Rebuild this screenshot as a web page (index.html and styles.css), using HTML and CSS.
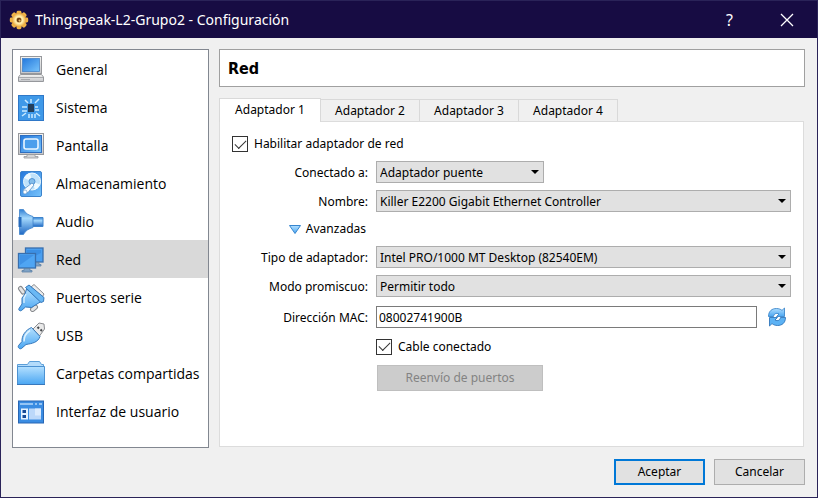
FILE: index.html
```html
<!DOCTYPE html>
<html lang="es">
<head>
<meta charset="utf-8">
<title>Thingspeak-L2-Grupo2 - Configuración</title>
<link rel="stylesheet" href="styles.css">
</head>
<body>
<svg class="defs" width="0" height="0" aria-hidden="true">
  <defs>
    <linearGradient id="blue" x1="0" y1="0" x2="1" y2="1"><stop offset="0" stop-color="#2478dc"/><stop offset="1" stop-color="#78c4fc"/></linearGradient>
    <linearGradient id="sky" x1="0" y1="0" x2="0" y2="1"><stop offset="0" stop-color="#b4e0ff"/><stop offset="1" stop-color="#4aa6f2"/></linearGradient>
    <linearGradient id="deep" x1="0" y1="0" x2="0" y2="1"><stop offset="0" stop-color="#2f7fd4"/><stop offset="0.35" stop-color="#a4d8fc"/><stop offset="1" stop-color="#1f68c4"/></linearGradient>
    <linearGradient id="grey" x1="0" y1="0" x2="0" y2="1"><stop offset="0" stop-color="#f4f4f2"/><stop offset="1" stop-color="#c4c6ca"/></linearGradient>
    <radialGradient id="gold"><stop offset="0" stop-color="#c88420"/><stop offset="0.5" stop-color="#fff0b0"/><stop offset="1" stop-color="#e8a030"/></radialGradient>
  </defs>
</svg>
<div class="window">
  <header class="titlebar">
    <svg class="app-icon" viewBox="0 0 20 20" aria-hidden="true">
      <g fill="#f0b548"><rect x="7.6" y="0.8" width="4.8" height="18.4" rx="1.4"/><rect x="7.6" y="0.8" width="4.8" height="18.4" rx="1.4" transform="rotate(45 10 10)"/><rect x="7.6" y="0.8" width="4.8" height="18.4" rx="1.4" transform="rotate(90 10 10)"/><rect x="7.6" y="0.8" width="4.8" height="18.4" rx="1.4" transform="rotate(135 10 10)"/></g>
      <circle cx="10" cy="10" r="7.2" fill="url(#gold)"/><circle cx="10" cy="10" r="2.3" fill="#6b3d10"/><circle cx="10.6" cy="10.6" r="1.1" fill="#e8c070"/>
    </svg>
    <h1 class="title">Thingspeak-L2-Grupo2 - Configuración</h1>
    <button class="caption-button" type="button" aria-label="Ayuda">?</button>
    <button class="caption-button" type="button" aria-label="Cerrar"><svg class="close-icon" viewBox="0 0 14 14"><path d="M1 1L13 13M13 1L1 13" stroke="#fff" stroke-width="1.3"/></svg></button>
  </header>
  <div class="body">
    <nav class="sidebar">
      <a class="item" href="#general"><svg class="icon" viewBox="0 0 28 28"><rect x="3.500" y="0.500" width="21" height="17" fill="url(#grey)" stroke="#96989c"/><rect x="5.500" y="2.500" width="17" height="13" fill="url(#blue)" stroke="#3a7cc8" stroke-width=".7"/><path d="M3.500 18.500h21l2 2.500v4.500h-25V21z" fill="url(#grey)" stroke="#96989c"/><path d="M2 21.500h24M4 23.500h9" stroke="#a8aaae"/></svg>General</a>
      <a class="item" href="#sistema"><svg class="icon" viewBox="0 0 28 28"><rect x="1.500" y="1.500" width="25" height="25" fill="#3f99e8" stroke="#2f78c8"/><g stroke="#c9eaff" stroke-width="1.500"><path d="M14 5v4M8 6l3 3M22 5l-4 4M5 13h5M5 17h5M18 13h3M18 16h4M19 19l4 3M12 20v4M15 20v4M18 20v4M9 19l-4 3"/></g><rect x="11" y="10" width="6" height="8" fill="#24405c"/></svg>Sistema</a>
      <a class="item" href="#pantalla"><svg class="icon" viewBox="0 0 28 28"><rect x="1.500" y="1.500" width="25" height="21" fill="url(#grey)" stroke="#96989c"/><rect x="3.500" y="3.500" width="21" height="17" fill="url(#blue)" stroke="#2f6fc0"/><rect x="7" y="7" width="14" height="10" rx="2" fill="#4b9eec" stroke="#eaf6ff" stroke-width="1.600"/><path d="M10 22.500h8v2h3v1.500H7v-1.500h3z" fill="#d6d6d6" stroke="#96989c" stroke-width=".8"/></svg>Pantalla</a>
      <a class="item" href="#almacenamiento"><svg class="icon" viewBox="0 0 28 28"><rect x="3.500" y="1.500" width="21" height="25" rx="1.500" fill="url(#blue)" stroke="#3b83cc"/><circle cx="15" cy="11.500" r="8.500" fill="#bfe2fb" stroke="#eefaff"/><path d="M15 11.500L7 8a8.500 8.500 0 0 1 6-5zM15 11.500l8 3a8.500 8.500 0 0 1-5 5z" fill="#eefaff"/><circle cx="15" cy="11.500" r="3" fill="#84bdea" stroke="#3b83cc" stroke-width=".8"/><path d="M15 13L6 20l1.500 3.500 3.500-1 6-7.500z" fill="#f6fbff" stroke="#5c93c8" stroke-width=".8"/><circle cx="8" cy="22" r="2" fill="#fff" stroke="#5c93c8" stroke-width=".6"/></svg>Almacenamiento</a>
      <a class="item" href="#audio"><svg class="icon" viewBox="0 0 28 28"><path d="M14 9.500h12v9H14z" fill="url(#deep)" stroke="#3f84cc"/><path d="M2.500 1.500h4c2 4 5 5.500 9.500 7v11c-4.500 1.500-7.500 3-9.500 7h-4z" fill="url(#deep)" stroke="#3f84cc" stroke-width=".8"/><path d="M1.500 9h3v10h-3z" fill="#256abc"/></svg>Audio</a>
      <a class="item active" href="#red" aria-current="page"><svg class="icon" viewBox="0 0 28 28"><rect x="8.500" y="2" width="17.500" height="14" fill="#4a9ff0" stroke="#386fae" stroke-width="1.300"/><path d="M10 4h14v3L10 14z" fill="#3b8fe4"/><path d="M15 16.500h7v2h2v1.500H13" fill="#7fa3c6" stroke="#5d81a6" stroke-width=".8"/><rect x="1.500" y="7.500" width="17" height="14.500" fill="#4fa5f3" stroke="#386fae" stroke-width="1.300"/><path d="M3 9h14L3 19z" fill="#3f92e6"/><path d="M7 22.500h6v2h2V26H5v-1.500h2z" fill="#7fa3c6" stroke="#5d81a6" stroke-width=".8"/></svg>Red</a>
      <a class="item" href="#puertos"><svg class="icon" viewBox="0 0 28 28"><path d="M14 3l3-2.500L27 10l-2 3.500z" fill="#ececec" stroke="#8a8c90"/><path d="M3.500 4.500L6 8M18.500 23l-3 2.500" stroke="#85888c" stroke-width="5" stroke-linecap="round"/><path d="M3.500 4.500L6 8M18.500 23l-3 2.500" stroke="#e4e4e4" stroke-width="3" stroke-linecap="round"/><path d="M9.500 5L24 17.500l-4 2.500-5.500 3.500-6-.5-4 3.500c-1.500 1-3.500-.5-2.500-2l3-4.500v-6l3-4z" fill="url(#sky)" stroke="#3577ba"/><path d="M8.500 3.500L12 1l15 12.500-.5 4-2.500 1z" fill="#6ab8f4" stroke="#3577ba"/><path d="M9 10l-2 4v5" fill="none" stroke="#def2ff" stroke-width="1.300"/></svg>Puertos serie</a>
      <a class="item" href="#usb"><svg class="icon" viewBox="0 0 28 28"><path d="M16 7l6-6 5 1 .5 5-5 7z" fill="#e9e9e9" stroke="#8a8c90"/><path d="M20.500 5l1.500 1.500M23.500 7.500L25 9" stroke="#44474b" stroke-width="2"/><path d="M14.500 5.500l8.500 9c-2 6-8 7-14 8l-4.500 4c-2 1-4-1-3-3l3.500-4C4.500 14 8.500 8 14.500 5.500z" fill="url(#sky)" stroke="#3577ba"/><path d="M13 8.500c-4 2.500-6 6-6 11" fill="none" stroke="#dff3ff" stroke-width="1.500"/></svg>USB</a>
      <a class="item" href="#carpetas"><svg class="icon" viewBox="0 0 28 28"><path d="M.5 24.500V4.500h10l2-3h10l2 3h2v20z" fill="#b4dcfb" stroke="#5c9fd8"/><path d="M.5 6.500h27v18H.5z" fill="url(#sky)" stroke="#4c92d2"/><path d="M0 24.500h28" stroke="#3878bc"/></svg>Carpetas compartidas</a>
      <a class="item" href="#interfaz"><svg class="icon" viewBox="0 0 28 28"><rect x="1.500" y="3" width="25" height="22" fill="#3a8ce2" stroke="#2866b4"/><path d="M3 6h13M18 6h2M22 6h3" stroke="#b4d8fc" stroke-width="1.300"/><path d="M4 10.500h7v11H4z" fill="#e7f3ff"/><path d="M12 10.500h12v11H12z" fill="#bcd8fa"/><path d="M18 10.500h6v7h-6z" fill="#dcebfe"/><path d="M5.500 12h3.500v3H5.500zM5.500 17h3.500v3H5.500z" fill="#174a96"/></svg>Interfaz de usuario</a>
    </nav>
    <main class="content">
      <h2 class="page-title">Red</h2>
      <div class="tabs" role="tablist">
        <button class="tab selected" type="button" role="tab" aria-selected="true">Adaptador 1</button>
        <button class="tab" type="button" role="tab" aria-selected="false">Adaptador 2</button>
        <button class="tab" type="button" role="tab" aria-selected="false">Adaptador 3</button>
        <button class="tab" type="button" role="tab" aria-selected="false">Adaptador 4</button>
      </div>
      <form class="panel" id="network">
        <label class="check"><input type="checkbox" checked>Habilitar adaptador de red</label>
        <div class="fields">
          <label class="label" for="attached">Conectado a:</label>
          <div class="select short"><select id="attached"><option>Adaptador puente</option></select></div>
          <label class="label" for="name">Nombre:</label>
          <div class="select"><select id="name"><option>Killer E2200 Gigabit Ethernet Controller</option></select></div>
          <button class="advanced" type="button" aria-expanded="true"><svg class="arrow" viewBox="0 0 12 9"><path d="M.5 .5h11L6 8.500z" fill="url(#sky)" stroke="#3585cf"/></svg>Avanzadas</button>
          <label class="label" for="type">Tipo de adaptador:</label>
          <div class="select"><select id="type"><option>Intel PRO/1000 MT Desktop (82540EM)</option></select></div>
          <label class="label" for="mode">Modo promiscuo:</label>
          <div class="select"><select id="mode"><option>Permitir todo</option></select></div>
          <label class="label mac-row" for="mac">Dirección MAC:</label>
          <div class="mac mac-row">
            <input class="text" id="mac" type="text" value="08002741900B">
            <button class="refresh" type="button" aria-label="Generar dirección MAC"><svg viewBox="0 0 20 20"><path d="M1.500 9.500C1.500 4 5 1.500 9.500 1.500c2.500 0 4 .7 5.500 1.900L17.500 1v8.500h-8L12 7C9 5.500 7 7 6.500 9.500z" fill="url(#sky)" stroke="#2f7dc6" stroke-width=".8"/><path d="M18.500 10.500c0 5.500-3.500 8-8 8-2.500 0-4-.7-5.500-1.900L2.500 19v-8.500h8L8 13c3 1.500 5 0 5.500-2.500z" fill="#5cb2f4" stroke="#226bb4" stroke-width=".8"/></svg></button>
          </div>
          <label class="check second"><input type="checkbox" checked>Cable conectado</label>
          <button class="button ports" type="button" disabled>Reenvío de puertos</button>
        </div>
      </form>
    </main>
  </div>
  <footer class="actions">
    <button class="button primary" type="submit" form="network">Aceptar</button>
    <button class="button" type="button">Cancelar</button>
  </footer>
</div>
</body>
</html>
```
FILE: styles.css
```css
* { box-sizing: border-box; }
body { margin: 0; background: #f0f0f0; color: #000; font: 12px/16px "Noto Sans", sans-serif; }
button, input, select { font: inherit; color: inherit; }
button { padding: 0; border: 0; background: none; }
.defs { position: absolute; }
.window { display: flex; flex-direction: column; min-height: 100vh; border: 1px solid #2a2358; background: #f0f0f0; }

.titlebar { display: flex; align-items: center; height: 37px; padding: 0 2px 0 8px; background: #170c43; color: #fff; }
.app-icon { width: 20px; height: 20px; }
.title { flex: 1; margin: 0 0 0 6px; font-size: 14px; font-weight: 400; line-height: 20px; }
.caption-button { display: flex; align-items: center; justify-content: center; width: 57px; height: 36px; font-size: 16px; }
.close-icon { width: 14px; height: 14px; }

.body { display: flex; flex: 1; gap: 10px; padding: 11px 12px 0 11px; }
.sidebar { flex: none; width: 197px; padding-bottom: 17px; border: 1px solid #828790; background: #fff; font-family: "Open Sans", sans-serif; font-size: 14px; }
.item { display: flex; align-items: center; gap: 11px; height: 38px; padding: 1px 0 0 4px; color: #000; text-decoration: none; white-space: nowrap; }
.item.active { background: #d9d9d9; }
.icon { flex: none; width: 28px; height: 28px; }

.content { display: flex; flex: 1; flex-direction: column; min-width: 0; }
.page-title { margin: 0 0 11px; padding: 9px 8px 8px; border: 1px solid #a0a0a0; background: #fff; font-family: "DejaVu Sans Condensed", "DejaVu Sans", sans-serif; font-size: 16px; line-height: 19px; }
.tabs { display: flex; align-items: flex-end; }
.tab { height: 22px; width: 99px; padding-top: 1px; border: 1px solid #d9d9d9; border-width: 1px 1px 0 0; white-space: nowrap; }
.tab.selected { width: 102px; height: 24px; margin-bottom: -1px; padding: 0 0 1px; border-left-width: 1px; background: #fff; z-index: 1; }
.panel { flex: 1; margin: 0 1px 1px 0; padding: 14px 12px; border: 1px solid #dcdcdc; background: #fff; }
.check { display: flex; align-items: center; gap: 6px; }
.check input { appearance: none; flex: none; display: grid; place-items: center; width: 16px; height: 16px; margin: 0; border: 1px solid #333; background: #fff; }
.check input:checked::before { content: ""; width: 10px; height: 5px; margin-bottom: 3px; border: solid #333; border-width: 0 0 1px 1px; transform: rotate(-45deg); }

.fields { display: grid; grid-template-columns: 136px 1fr; column-gap: 8px; row-gap: 7px; align-items: center; margin-top: 9px; }
.label { grid-column: 1; padding-top: 1px; text-align: right; white-space: nowrap; }
.select { position: relative; height: 22px; }
.select::after { content: ""; position: absolute; top: 9px; right: 5px; border: 4px solid transparent; border-top-color: #000; border-bottom: 0; pointer-events: none; }
.select.short { width: 168px; }
.select select { appearance: none; display: block; width: 100%; height: 22px; padding: 1px 16px 0 3px; border: 1px solid #adadad; border-radius: 0; background: #e1e1e1; }
.advanced { grid-column: 1; display: flex; align-items: center; justify-self: end; gap: 5px; height: 20px; margin-right: 2px; }
.arrow { width: 12px; height: 9px; }
.mac-row { margin-top: 2px; }
.mac { display: flex; align-items: center; gap: 10px; }
.text { flex: 1; min-width: 0; height: 22px; padding: 0 2px; border: 1px solid #7a7a7a; background: #fff; }
.refresh { width: 20px; height: 20px; margin-right: 4px; }
.refresh svg { display: block; }
.second, .ports { grid-column: 2; }
.second { height: 23px; }
.button { width: 91px; height: 26px; border: 1px solid #adadad; background: #e1e1e1; }
.button.primary { border: 2px solid #0078d7; }
.button.ports { width: 166px; margin-left: 1px; border-color: #bfbfbf; background: #ccc; color: #838383; }
.actions { display: flex; justify-content: flex-end; gap: 9px; padding: 11px 12px 12px; }
```
